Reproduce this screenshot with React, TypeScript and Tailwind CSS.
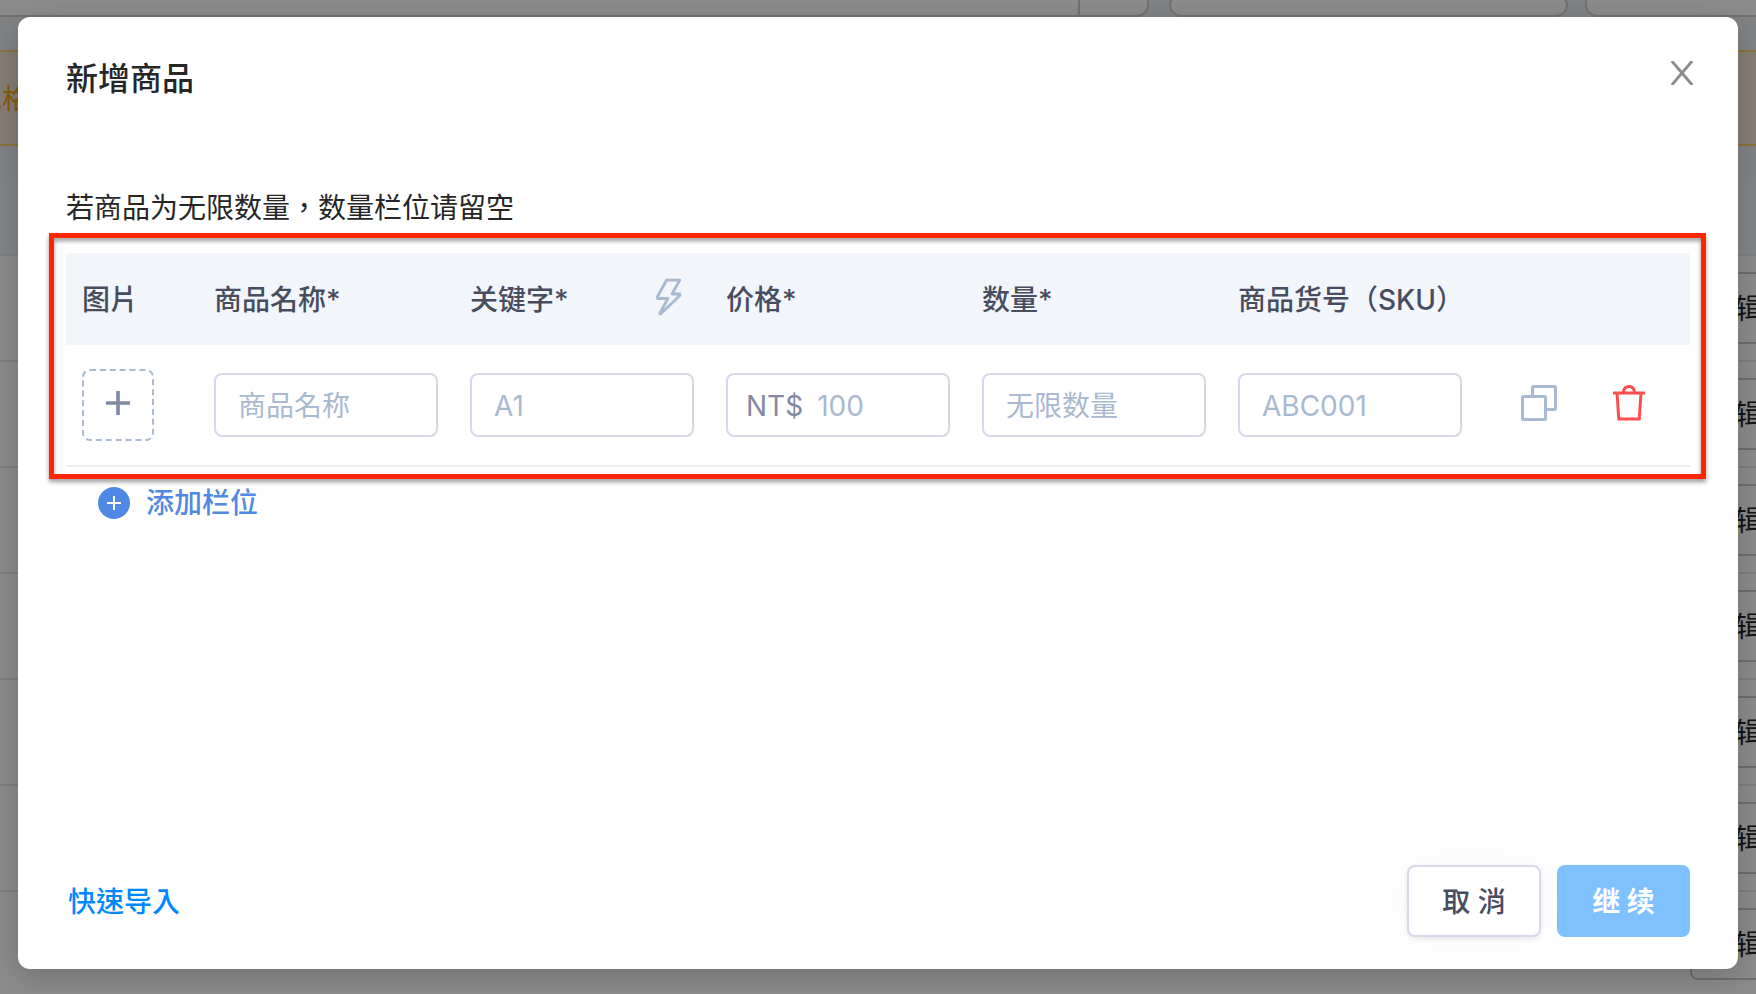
import React from 'react';

const rows = [0, 1, 2, 3, 4, 5, 6];

const columns = [
  { id: 'name', label: '商品名称*', placeholder: '商品名称' },
  { id: 'keyword', label: '关键字*', placeholder: 'A1' },
  { id: 'price', label: '价格*', placeholder: '100', prefix: 'NT$' },
  { id: 'quantity', label: '数量*', placeholder: '无限数量' },
  { id: 'sku', label: '商品货号（SKU）', placeholder: 'ABC001' },
];

function CloseIcon() {
  return (
    <svg width="24" height="24" viewBox="0 0 24 24" fill="none" stroke="#8c8c8c" strokeWidth="2.8">
      <path d="M1.8 0 22.2 24M22.2 0 1.8 24" />
    </svg>
  );
}

function BoltIcon() {
  return (
    <svg
      width="26"
      height="38"
      viewBox="0 0 26 38"
      fill="none"
      stroke="#a9b9d0"
      strokeWidth="2.8"
      strokeLinejoin="round"
    >
      <path d="M10.5 2.2h13.2L16 16h7.8v1.6L4.6 36l-.9-.6L12 20.5H1.5v-2z" />
    </svg>
  );
}

function CopyIcon() {
  return (
    <svg width="36" height="36" viewBox="0 0 36 36" fill="none" stroke="#a9b9d0" strokeWidth="3">
      <rect x="1.5" y="11.5" width="23" height="23" rx="1" />
      <path d="M11.5 11V2.5a1 1 0 0 1 1-1h21a1 1 0 0 1 1 1v21a1 1 0 0 1-1 1H25" />
    </svg>
  );
}

function TrashIcon() {
  return (
    <svg width="32" height="36" viewBox="0 0 32 36" fill="none" stroke="#ff4d4f" strokeWidth="3">
      <path d="M0 8h32M4 8l1.8 26h20.4L28 8M10.3 7.5c.4-3.6 2.6-6 5.7-6s5.3 2.4 5.7 6" />
    </svg>
  );
}

// The product list that stays visible around the dialog
function Background() {
  return (
    <div className="h-full overflow-hidden bg-[#eceff3]" aria-hidden="true">
      <div className="flex h-[17px] items-end">
        <div className="flex h-6 flex-1 justify-end rounded-br-xl border-2 border-l-0 border-[#d0d0d0] bg-white">
          <div className="w-[69px] border-l-2 border-[#d0d0d0]" />
        </div>
        <div className="ml-5 h-6 w-[399px] rounded-xl border-2 border-[#d0d0d0] bg-white" />
        <div className="ml-[17px] h-6 w-[171px] rounded-bl-xl border-2 border-r-0 border-[#d0d0d0] bg-white" />
      </div>
      <div className="mt-[33px] flex h-24 items-center border-y-2 border-[#fbcf70] bg-[#f6e6d6]">
        <p className="-ml-[26px] pt-0.5 text-[28px] text-[#f5a810]">规格</p>
      </div>
      <div className="mt-8 h-[78px] border-b-2 border-[#e4e7f0] bg-[#eff2f6]" />
      {rows.map((row) => (
        <div key={row} className="flex h-[106px] justify-end border-b-2 border-[#e4e7f0] bg-white">
          <div className="mt-4 flex h-[72px] w-[66px] items-center rounded-l-lg border-2 border-r-0 border-[#c8c8c8] pt-0.5 pl-[42px] text-[28px] text-[#262626]">
            辑
          </div>
        </div>
      ))}
    </div>
  );
}

function Field({ column }) {
  const [value, setValue] = React.useState('');

  function handleChange(e) {
    setValue(e.target.value);
  }

  return (
    <div
      className={
        column.prefix
          ? 'flex h-16 items-center gap-3.5 rounded-lg border-2 border-[#d6d9e8] px-[18px] pt-0.5'
          : 'flex h-16 items-center rounded-lg border-2 border-[#d6d9e8] px-[22px] pt-0.5'
      }
    >
      {column.prefix && <span className="text-[#8289a3]">{column.prefix}</span>}
      <input
        type="text"
        id={column.id}
        name={column.id}
        aria-label={column.label}
        placeholder={column.placeholder}
        value={value}
        onChange={handleChange}
        className="w-full min-w-0 bg-transparent text-[#474d5e] outline-none placeholder:text-[#a9b9d0]"
      />
    </div>
  );
}

function ProductTable() {
  return (
    <div className="relative">
      <table className="w-full table-fixed border-separate border-spacing-0">
        <thead>
          <tr className="h-[92px] bg-[#f2f5fa] text-left text-[#474d5e]">
            <th className="w-[132px] rounded-tl px-4 pt-0.5 font-medium">图片</th>
            {columns.map((column) => (
              <th key={column.id} className="px-4 pt-0.5 font-medium whitespace-nowrap">
                <div className="flex items-center justify-between">
                  {column.label}
                  {column.id === 'keyword' && (
                    <button type="button" aria-label="bolt" className="-mt-1.5 mr-3">
                      <BoltIcon />
                    </button>
                  )}
                </div>
              </th>
            ))}
            <th className="w-[212px] rounded-tr" />
          </tr>
        </thead>
        <tbody>
          <tr className="h-[122px]">
            <td className="border-b-2 border-[#ebf0f5] px-4">
              <button
                type="button"
                aria-label="add image"
                className="flex size-[72px] items-center justify-center rounded-lg border-2 border-dashed border-[#a9b9d0] pb-1"
              >
                <svg width="24" height="24" viewBox="0 0 24 24" stroke="#8289a3" strokeWidth="3.6">
                  <path d="M12 0v24M0 12h24" />
                </svg>
              </button>
            </td>
            {columns.map((column) => (
              <td key={column.id} className="border-b-2 border-[#ebf0f5] px-4">
                <Field column={column} />
              </td>
            ))}
            <td className="border-b-2 border-[#ebf0f5] pr-[45px] pb-1 pl-[43px]">
              <div className="flex items-center justify-between">
                <button type="button" aria-label="copy">
                  <CopyIcon />
                </button>
                <button type="button" aria-label="delete">
                  <TrashIcon />
                </button>
              </div>
            </td>
          </tr>
        </tbody>
      </table>
      <div className="pointer-events-none absolute -top-5 -right-4 -bottom-3 -left-[17px] border-[5px] border-[#ff2600] drop-shadow-[0_3px_2px_rgba(0,0,0,0.4)]" />
    </div>
  );
}

function App() {
  return (
    <div className="relative h-screen overflow-hidden font-[Inter,'Noto_Sans_CJK_TC',sans-serif] text-[28px] leading-10 text-[#262626]">
      <Background />
      <div className="absolute inset-0 flex bg-black/45 px-[18px] pt-[17px] pb-[25px]">
        <div
          role="dialog"
          aria-labelledby="title"
          className="flex flex-1 flex-col rounded-xl bg-white px-12 pb-8 shadow-[0_8px_32px_rgba(0,0,0,0.2)]"
        >
          <div className="flex items-start justify-between pt-10">
            <h1 id="title" className="text-[32px] leading-11 font-medium">
              新增商品
            </h1>
            <button type="button" aria-label="close" className="-mr-2 p-1">
              <CloseIcon />
            </button>
          </div>
          <p className="mt-[87px] mb-[25px]">若商品为无限数量，数量栏位请留空</p>
          <ProductTable />
          <button
            type="button"
            className="mt-4 ml-8 flex items-center gap-4 self-start font-medium text-[#4f89e4]"
          >
            <svg width="32" height="32" viewBox="0 0 32 32">
              <circle cx="16" cy="16" r="16" fill="#4f89e4" />
              <path d="M16 9v14M9 16h14" stroke="#fff" strokeWidth="2" />
            </svg>
            添加栏位
          </button>
          <div className="mt-auto flex items-center gap-4">
            <button type="button" className="mr-auto px-0.5 pt-0.5 font-medium text-[#0088ff]">
              快速导入
            </button>
            <button
              type="button"
              className="h-[72px] w-[134px] rounded-lg border-2 border-[#d6d9e8] bg-white pt-0.5 font-medium text-[#474d5e] shadow-[0_2px_4px_rgba(0,0,0,0.08),0_0_40px_rgba(0,0,0,0.04)]"
            >
              取 消
            </button>
            <button
              type="button"
              className="h-[72px] w-[133px] rounded-lg bg-[#7fc1ff] pt-0.5 font-bold text-white"
            >
              继 续
            </button>
          </div>
        </div>
      </div>
    </div>
  );
}

export default App;
